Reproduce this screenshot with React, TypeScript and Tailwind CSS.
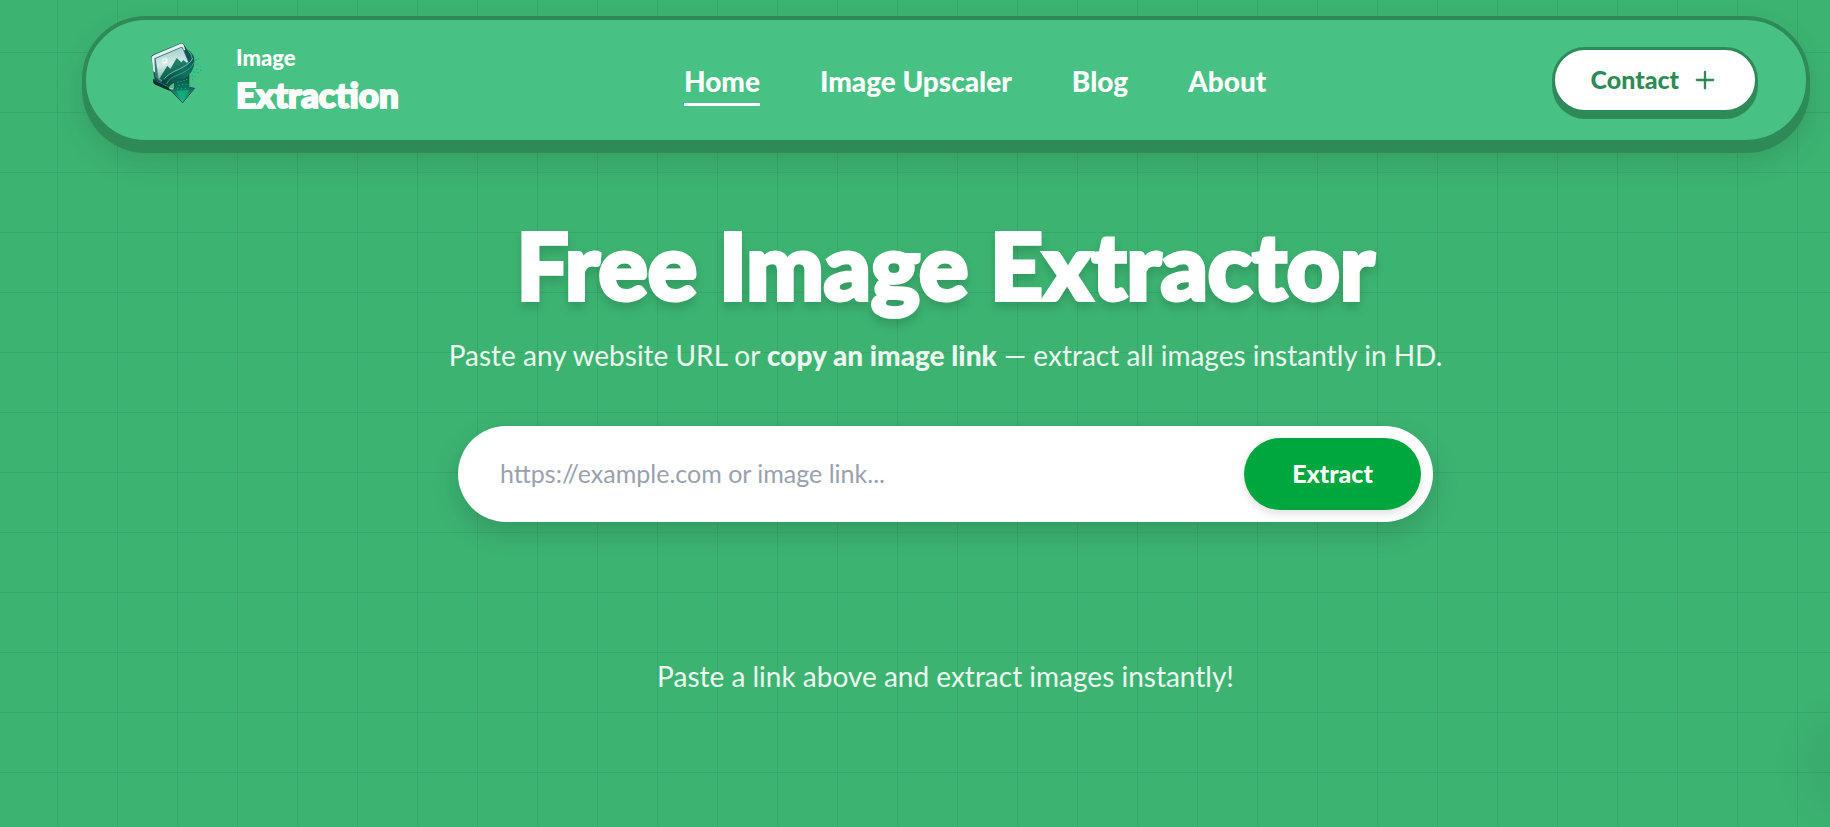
import { useState } from "react";
import { Plus } from "lucide-react";

const links = ["Home", "Image Upscaler", "Blog", "About"];

const Logo = () => (
  <svg viewBox="0 0 270 300" className="h-[100px] w-[90px] shrink-0" aria-hidden="true">
    <defs>
      <linearGradient id="photo" x1="0.4" y1="0" x2="0.5" y2="1">
        <stop offset="0" stopColor="#a3cfcb" />
        <stop offset="0.5" stopColor="#d3ebe7" />
        <stop offset="1" stopColor="#6db3a2" />
      </linearGradient>
      <linearGradient id="hill" x1="0" y1="0" x2="0" y2="1">
        <stop offset="0" stopColor="#23866c" />
        <stop offset="1" stopColor="#0a5c49" />
      </linearGradient>
      <linearGradient id="ribbon" x1="0" y1="1" x2="1" y2="0">
        <stop offset="0" stopColor="#06403a" />
        <stop offset="0.55" stopColor="#0d7360" />
        <stop offset="1" stopColor="#0a5a50" />
      </linearGradient>
      <linearGradient id="arrow" x1="0" y1="0" x2="0" y2="1">
        <stop offset="0" stopColor="#064a40" />
        <stop offset="0.6" stopColor="#0a7a60" />
        <stop offset="1" stopColor="#1cc391" />
      </linearGradient>
    </defs>
    <path d="M70 146 L84 156 L124 176 L118 182 L76 164 Q66 158 70 146 Z" fill="#06302f" />
    <path d="M64 82 Q64 76 72 73 L152 40 Q159 38 162 44 L182 74 L188 92 L180 122 L130 160 L106 166 L74 152 Z" fill="#175158" />
    <path d="M65 84 Q65 78 72 75 L152 41 Q158 39 161 45 L166 60 L76 90 L78 130 L70 124 Z" fill="#e3f0ee" />
    <path d="M73 85 L153 51 Q157 50 159 54 L178 100 L92 156 L76 140 Z" fill="#3d7a7e" />
    <path d="M77 86 L152 54 Q156 53 158 57 L174 96 L94 152 L86 146 Z" fill="url(#photo)" />
    <circle cx="104" cy="92" r="9" fill="#f5fbfa" />
    <circle cx="102" cy="90" r="7" fill="#d8edea" />
    <path d="M88 146 L112 107 L121 117 L140 84 L154 97 L160 90 L174 101 L104 156 Z" fill="url(#hill)" />
    <path d="M170 58 Q190 72 186 88 Q174 108 126 126 Q98 140 96 158 L116 172 Q124 158 158 146 Q196 130 193 86 Q190 68 170 58 Z" fill="url(#ribbon)" />
    <path d="M102 148 Q112 132 146 118 Q182 102 188 84" fill="none" stroke="#8cc5b8" strokeWidth="2.5" />
    <path d="M110 162 Q116 144 150 132 Q184 118 191 98" fill="none" stroke="#4d9f8b" strokeWidth="2.5" />
    <path d="M132 150 Q168 148 178 132 L178 173 L193 174 L158 217 L119 178 L134 174 Z" fill="url(#arrow)" />
    <path d="M117 174 L134 176 L134 156 M178 172 L194 175 L158 218 L118 178" fill="none" stroke="#27484b" strokeWidth="3" />
    <path d="M138 182 L178 180 L158 210 Z" fill="#16ad82" opacity="0.8" />
    <path d="M118 174 L130 177" stroke="#a9cfc7" strokeWidth="4" />
    <path d="M144 154v4M153 152v4M162 150v4M170 146v4M147 164v4M158 161v4M168 161v4M143 173v4M154 175v4M166 173v4M152 189v4M162 191v4" stroke="#21c495" strokeWidth="4" opacity="0.6" />
    <path d="M196 90h5M204 87h3M199 103h4M209 109h3M198 118h5M190 126h6M202 128h4M184 138h5M193 140h4M210 121h3M186 148h4" stroke="#12b286" strokeWidth="4" />
  </svg>
);

export default function App() {
  const [url, setUrl] = useState("");

  return (
    <div className="min-h-screen overflow-hidden bg-[#3cb371] bg-[linear-gradient(to_right,rgba(46,139,87,0.3)_1px,transparent_1px),linear-gradient(to_bottom,rgba(46,139,87,0.3)_1px,transparent_1px),radial-gradient(circle_at_calc(100%+24px)_765px,rgba(46,139,87,0.3),transparent_80px)] bg-[size:60px_60px,60px_60px,auto] bg-[position:57px_52px,57px_52px,0_0] pt-4 pl-[61px] font-['Lato',sans-serif] text-white">
      <header className="mr-5 ml-[21px] flex h-32 items-center justify-between rounded-[64px] border-4 border-[#2e8b57] bg-[#48c284] pr-12 pl-11 shadow-[0_9px_0_#2e8b57,0_16px_32px_rgba(0,0,0,0.12)]">
        <a href="#" className="flex items-center gap-4">
          <Logo />
          <span className="flex flex-col gap-0.5 pb-0.5">
            <span className="text-[22px] leading-7 font-black">Image</span>
            <span className="text-[35px] leading-10 font-black [-webkit-text-stroke:2px_white]">Extraction</span>
          </span>
        </a>

        <nav className="flex gap-[60px]">
          {links.map((label, i) => (
            <a
              key={label}
              href="#"
              className={`border-b-3 pt-1.5 pb-0.5 text-[28px] leading-10 font-black ${i === 0 ? "border-white" : "border-transparent"}`}
            >
              {label}
            </a>
          ))}
        </nav>

        <button className="flex h-[66px] items-center gap-3 rounded-full border-3 border-[#2e8b57] bg-white px-9 text-[25px] font-black text-[#2e8b57] shadow-[0_6px_0_#2e8b57]">
          Contact
          <Plus className="h-7 w-7" strokeWidth={2} />
        </button>
      </header>

      <main className="mx-auto flex max-w-[975px] flex-col items-center pt-[67px]">
        <h1 className="text-[92px] leading-[108px] font-black whitespace-nowrap drop-shadow-[0_6px_5px_rgba(0,0,0,0.14)] [-webkit-text-stroke:4px_white]">
          Free Image Extractor
        </h1>
        <p className="mt-4 text-[28px] leading-10 whitespace-nowrap text-white/90">
          Paste any website URL or <strong className="font-black">copy an image link</strong> — extract all images instantly in HD.
        </p>

        <form
          onSubmit={(e) => e.preventDefault()}
          className="mt-[51px] flex h-24 w-full items-center rounded-full bg-white p-3 shadow-[0_10px_28px_rgba(0,0,0,0.15)]"
        >
          <input
            type="text"
            aria-label="Website URL or image link"
            value={url}
            onChange={(e) => setUrl(e.target.value)}
            placeholder="https://example.com or image link..."
            className="min-w-0 flex-1 bg-transparent px-[30px] text-[25px] text-gray-800 outline-none placeholder:text-[#99a1af]"
          />
          <button className="h-[72px] w-[177px] rounded-full bg-[#00a63e] text-[25px] font-black shadow-[0_4px_8px_rgba(0,0,0,0.12)]">
            Extract
          </button>
        </form>

        <p className="mt-[134px] text-[28px] leading-10 text-white/90">Paste a link above and extract images instantly!</p>
      </main>
    </div>
  );
}
